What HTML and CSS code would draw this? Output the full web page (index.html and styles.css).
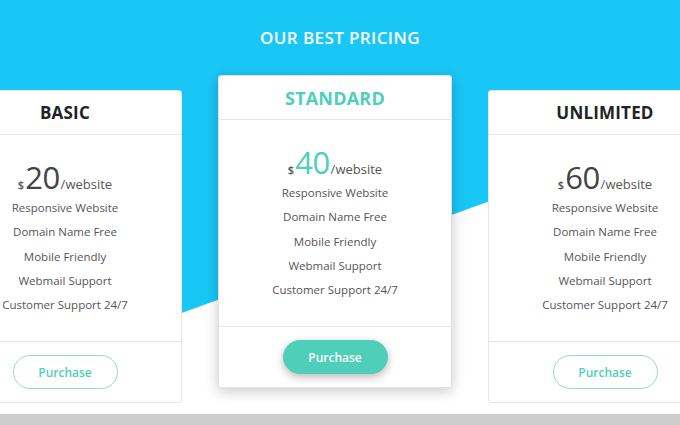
FILE: index.html
```html
<!DOCTYPE html>
<html lang="en">
<head>
<meta charset="utf-8">
<title>Our Best Pricing</title>
<link rel="stylesheet" href="styles.css">
</head>
<body>
<section class="pricing">
  <h1 class="title">OUR BEST PRICING</h1>
  <div class="cards">
    <div class="card side">
      <div class="card-head"><h2 class="plan">BASIC</h2></div>
      <div class="card-body">
        <div class="price"><span class="cur">$</span><span class="amt">20</span><span class="per">/website</span></div>
        <ul class="features">
          <li>Responsive Website</li>
          <li>Domain Name Free</li>
          <li>Mobile Friendly</li>
          <li>Webmail Support</li>
          <li>Customer Support 24/7</li>
        </ul>
      </div>
      <div class="card-foot"><button class="btn">Purchase</button></div>
    </div>
    <div class="card featured">
      <div class="card-head"><h2 class="plan">STANDARD</h2></div>
      <div class="card-body">
        <div class="price"><span class="cur">$</span><span class="amt">40</span><span class="per">/website</span></div>
        <ul class="features">
          <li>Responsive Website</li>
          <li>Domain Name Free</li>
          <li>Mobile Friendly</li>
          <li>Webmail Support</li>
          <li>Customer Support 24/7</li>
        </ul>
      </div>
      <div class="card-foot"><button class="btn">Purchase</button></div>
    </div>
    <div class="card side">
      <div class="card-head"><h2 class="plan">UNLIMITED</h2></div>
      <div class="card-body">
        <div class="price"><span class="cur">$</span><span class="amt">60</span><span class="per">/website</span></div>
        <ul class="features">
          <li>Responsive Website</li>
          <li>Domain Name Free</li>
          <li>Mobile Friendly</li>
          <li>Webmail Support</li>
          <li>Customer Support 24/7</li>
        </ul>
      </div>
      <div class="card-foot"><button class="btn">Purchase</button></div>
    </div>
  </div>
</section>
<div class="bottom-bar"></div>
</body>
</html>
```

FILE: styles.css
```css
* { box-sizing: border-box; }
html, body { margin: 0; padding: 0; }
body {
  width: 680px;
  height: 425px;
  overflow: hidden;
  background: #ffffff;
  font-family: "Open Sans", "DejaVu Sans", sans-serif;
}
.pricing {
  position: relative;
  height: 414px;
  overflow: hidden;
  padding-top: 27px;
}
.pricing::before {
  content: "";
  position: absolute;
  inset: 0;
  background: #19c7f6;
  clip-path: polygon(0 0, 680px 0, 680px 132px, 0 379px);
  z-index: 0;
}
.title {
  position: relative;
  margin: 0;
  text-align: center;
  color: #ffffff;
  font-size: 17px;
  font-weight: 600;
  line-height: 22px;
  letter-spacing: 0.4px;
}
.cards {
  position: relative;
  display: flex;
  align-items: flex-start;
  gap: 36px;
  margin-left: -52px;
  margin-top: 26px;
}
.card {
  flex: 0 0 234px;
  width: 234px;
  background: #ffffff;
  border: 1px solid #e6e6e6;
  border-radius: 3px;
  text-align: center;
}
.card.side { margin-top: 15px; }
.card.featured {
  border-color: #e2e2e2;
  box-shadow: 0 3px 14px rgba(0,0,0,0.22);
}
.card-head {
  height: 44px;
  border-bottom: 1px solid #e6e6e6;
  display: flex;
  align-items: center;
  justify-content: center;
}
.plan {
  margin: 0;
  font-size: 17px;
  font-weight: 700;
  color: #222222;
  letter-spacing: 0.2px;
}
.featured .plan { color: #4fcfb9; font-size: 18px; }
.card-body {
  padding: 24px 0 24px;
  border-bottom: 1px solid #e6e6e6;
}
.price {
  height: 37px;
  line-height: 37px;
  color: #555555;
  white-space: nowrap;
}
.cur { font-size: 11px; font-weight: 600; margin-right: 1px; }
.amt { font-size: 31px; font-weight: 500; color: #444444; letter-spacing: -0.5px; }
.featured .amt { color: #4fcfb9; }
.per { font-size: 13px; margin-left: 1px; }
.features {
  list-style: none;
  margin: 0;
  padding: 0;
}
.features li {
  height: 24.3px;
  line-height: 24.3px;
  font-size: 11.5px;
  color: #555555;
  white-space: nowrap;
}
.card-foot {
  height: 60px;
  display: flex;
  align-items: center;
  justify-content: center;
}
.btn {
  width: 105px;
  height: 34px;
  border-radius: 17px;
  border: 1px solid #8fdccd;
  background: #ffffff;
  color: #4fcfb9;
  font-family: inherit;
  font-size: 12px;
  font-weight: 600;
}
.featured .btn {
  background: #4fcfb9;
  border-color: #4fcfb9;
  color: #ffffff;
  box-shadow: 0 3px 8px rgba(0,0,0,0.28);
}
.bottom-bar {
  height: 11px;
  background: #cccccc;
}
```
